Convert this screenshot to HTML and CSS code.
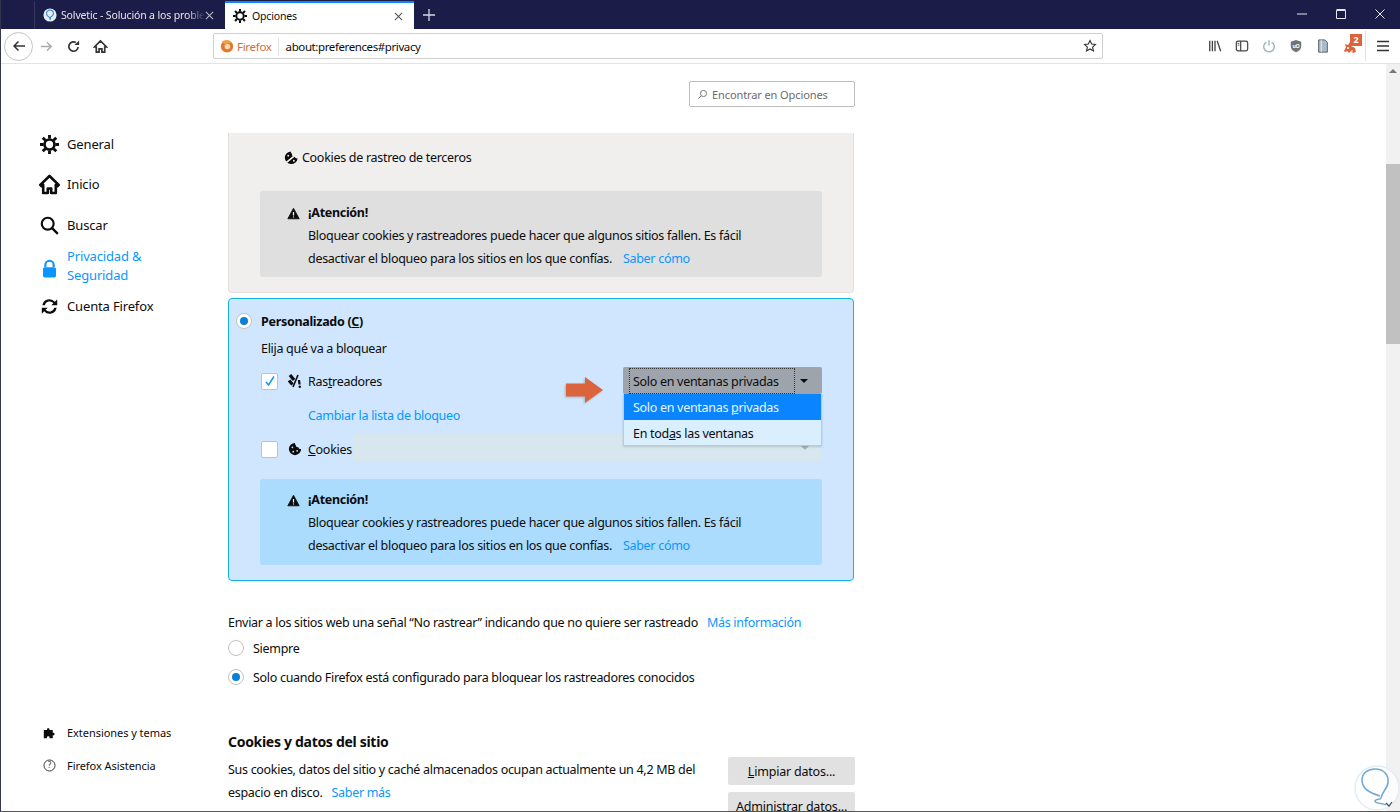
FILE: index.html
```html
<!DOCTYPE html>
<html lang="es">
<head>
  <meta charset="utf-8">
  <title>Opciones</title>
  <link rel="stylesheet" href="styles.css">
</head>
<body>
<div class="window">
  <div class="tabbar">
    <div class="tab tab-bg">
      <svg class="fav" viewBox="0 0 16 16"><circle cx="8" cy="8" r="7.5" fill="#e4eef6"/><path d="M8 2.500c-2.600 0-4.200 2-4 4.200.2 2 2 3 3.200 4 .6.5.6 1.500 1 2.300.5-.4.7-1.500.2-2.500 2-1 3.500-2.300 3.500-4.200 0-2.200-1.700-3.800-3.900-3.800z" fill="none" stroke="#4a8fc4" stroke-width="1.300"/></svg>
      <span class="tab-title fade">Solvetic - Solución a los proble</span>
      <svg class="tab-x" viewBox="0 0 10 10"><path d="M1 1l8 8M9 1l-8 8" stroke="#b9bacb" stroke-width="1.200"/></svg>
    </div>
    <div class="tab tab-on">
      <svg class="fav" viewBox="0 0 16 16"><use href="#gear"/></svg>
      <span class="tab-title">Opciones</span>
      <svg class="tab-x" viewBox="0 0 10 10"><path d="M1 1l8 8M9 1l-8 8" stroke="#555" stroke-width="1.200"/></svg>
    </div>
    <svg class="newtab" viewBox="0 0 12 12"><path d="M6 0v12M0 6h12" stroke="#d6d7e2" stroke-width="1.300"/></svg>
    <div class="winctl">
      <svg viewBox="0 0 10 10"><path d="M0 5h10" stroke="#e6e6ee"/></svg>
      <svg viewBox="0 0 10 10"><path d="M.5 1.500h9v8h-9z M.5 .5h9" fill="none" stroke="#e6e6ee"/></svg>
      <svg viewBox="0 0 10 10"><path d="M.5 .5l9 9M9.500 .5l-9 9" stroke="#e6e6ee"/></svg>
    </div>
  </div>

  <div class="toolbar">
    <div class="back"><svg viewBox="0 0 16 16"><path d="M14 8H3M7.500 3.500L3 8l4.500 4.500" fill="none" stroke="#333" stroke-width="1.500"/></svg></div>
    <svg class="tbicon first" viewBox="0 0 16 16"><path d="M2 8h11M8.500 3.500L13 8l-4.500 4.500" fill="none" stroke="#aaa" stroke-width="1.500"/></svg>
    <svg class="tbicon" viewBox="0 0 16 16"><path d="M13 8.500A5 5 0 1 1 10.500 3.700" fill="none" stroke="#333" stroke-width="1.800"/><path d="M14 1.500v5h-5z" fill="#333"/></svg>
    <svg class="tbicon" viewBox="0 0 16 16"><path d="M8 2L1.500 8.500H3.500V14h3v-3.500h3V14h3V8.500h2z" fill="none" stroke="#333" stroke-width="1.800"/></svg>
    <div class="urlbar">
      <svg class="fxlogo" viewBox="0 0 16 16"><circle cx="8" cy="8.500" r="7" fill="#e8752c"/><circle cx="8.500" cy="8.500" r="3.200" fill="#f8d9b8"/><path d="M2.500 3c3-2.500 9-2.500 11 2-3-1-6 0-7 2z" fill="#f3a13a"/></svg>
      <span class="fxname">Firefox</span>
      <span class="urlsep"></span>
      <span class="urltext">about:preferences#privacy</span>
      <svg class="star" viewBox="0 0 16 16"><path d="M8 1.800l1.900 4 4.300.5-3.200 3 .9 4.300L8 11.400l-3.900 2.200.9-4.300-3.200-3 4.300-.5z" fill="none" stroke="#333" stroke-width="1.300"/></svg>
    </div>
    <div class="tools">
      <svg viewBox="0 0 16 16"><path d="M2 2v12M5 2v12M8 2v12M10.500 2l4 12" stroke="#444" stroke-width="1.500" fill="none"/></svg>
      <svg viewBox="0 0 16 16"><rect x="1.500" y="2.500" width="13" height="11" rx="2" fill="none" stroke="#444" stroke-width="1.400"/><path d="M6.500 2.500v11" stroke="#444" stroke-width="1.400"/><path d="M3 5h2M3 7h2" stroke="#444"/></svg>
      <svg viewBox="0 0 16 16"><path d="M5 3.500a6 6 0 1 0 6 0" fill="none" stroke="#9db2bf" stroke-width="1.600"/><path d="M8 1.500v6" stroke="#9db2bf" stroke-width="1.600"/></svg>
      <svg viewBox="0 0 16 16"><path d="M8 1l6 2v5c0 3.500-2.500 6-6 7-3.500-1-6-3.500-6-7V3z" fill="#6f7478"/><text x="8" y="10" class="ublock">uO</text></svg>
      <svg viewBox="0 0 16 16"><path d="M3 1h7l3 3v11H3z" fill="#a9bccb" stroke="#555"/><path d="M6 1v14" stroke="#eef2f5"/></svg>
      <div class="ext">
        <svg viewBox="0 0 14 14"><path d="M1 11l2-4-1-3 3 1 2-3 1 4 4 2 1 4-3 1-2-2-2 2-2-2-2 1z" fill="#d9663c"/><circle cx="5" cy="8" r="1" fill="#fff"/><circle cx="9" cy="11" r="1" fill="#f3c7b4"/></svg>
        <span class="badge">2</span>
      </div>
      <span class="toolsep"></span>
      <svg class="burger" viewBox="0 0 12 12"><path d="M0 1.500h12M0 6h12M0 10.500h12" stroke="#333" stroke-width="1.600"/></svg>
    </div>
  </div>

  <div class="page">
    <nav class="sidebar">
      <ul class="nav-main">
        <li class="nav-item"><svg viewBox="0 0 16 16"><use href="#gear"/></svg>General</li>
        <li class="nav-item"><svg class="nav-home" viewBox="0 0 16 16"><path d="M8 1.500L1 8.300l1 1 1.200-1.100V14.500h3.500v-3.500h2.600v3.500h3.500V8.200L14 9.300l1-1z" fill="none" stroke="#0c0c0d" stroke-width="2" stroke-linejoin="round"/></svg>Inicio</li>
        <li class="nav-item"><svg viewBox="0 0 16 16"><circle cx="6.500" cy="6.500" r="5" fill="none" stroke="#0c0c0d" stroke-width="1.800"/><path d="M10.200 10.200L15 15" stroke="#0c0c0d" stroke-width="2"/></svg>Buscar</li>
        <li class="nav-item nav-active"><svg viewBox="0 0 16 16"><path d="M4.500 7V5a3.500 3.500 0 0 1 7 0v2" fill="none" stroke="#0a96ff" stroke-width="1.800"/><rect x="2.500" y="7" width="11" height="8.500" rx="1.500" fill="#0a96ff"/></svg><span>Privacidad &amp;<br>Seguridad</span></li>
        <li class="nav-item"><svg viewBox="0 0 16 16"><path d="M2 7a6 6 0 0 1 10.500-3L14.500 2v5h-5l1.800-1.800A4.200 4.200 0 0 0 4 7zM14 9a6 6 0 0 1-10.500 3L1.500 14V9h5L4.700 10.800A4.200 4.200 0 0 0 12 9z" fill="#0c0c0d"/></svg>Cuenta Firefox</li>
      </ul>
      <ul class="nav-foot">
        <li class="foot-item"><svg viewBox="0 0 16 16"><path d="M1 5h4c-1-3 4-3 3 0h4v3.500c3-1 3 4 0 3V15H8c1-3-4-3-3 0H1z" fill="#0c0c0d"/></svg>Extensiones y temas</li>
        <li class="foot-item"><svg viewBox="0 0 16 16"><circle cx="8" cy="8" r="6.800" fill="none" stroke="#333" stroke-width="1.200"/><text x="8" y="11.500" class="qmark">?</text></svg>Firefox Asistencia</li>
      </ul>
    </nav>

    <main class="content">
      <div class="search-row">
        <div class="search"><svg viewBox="0 0 16 16"><circle cx="9.500" cy="6.500" r="4.500" fill="none" stroke="#777" stroke-width="1.400"/><path d="M6 10l-4 4" stroke="#777" stroke-width="1.400"/></svg>Encontrar en Opciones</div>
      </div>

      <section class="panel panel-grey">
        <div class="tp-row">
          <svg viewBox="0 0 16 16"><path d="M7 1.500a6.800 6.800 0 1 0 7.500 7.500c-1.800.2-2.800-.6-3-2-1.800.2-3.300-1-3-2.800C7.800 3.500 7.200 2.500 7 1.500z" fill="#0c0c0d"/><path d="M1 14.500L15 3" stroke="#f0efee" stroke-width="1.800"/><circle cx="4.500" cy="6" r="1" fill="#f0efee"/><circle cx="10.500" cy="11.500" r="1" fill="#f0efee"/></svg>
          Cookies de rastreo de terceros
        </div>
        <div class="warn warn-grey">
          <svg class="warn-icon" viewBox="0 0 16 16"><path d="M8 1.500L15 14.500H1z" fill="#0c0c0d" stroke="#0c0c0d" stroke-linejoin="round"/><path d="M8 6v4.500M8 11.800v1.200" stroke="#fff" stroke-width="1.500"/></svg>
          <div>
            <strong class="warn-title">¡Atención!</strong>
            <p class="warn-text">Bloquear cookies y rastreadores puede hacer que algunos sitios fallen. Es fácil<br>desactivar el bloqueo para los sitios en los que confías. <a class="link warn-link">Saber cómo</a></p>
          </div>
        </div>
      </section>

      <section class="panel panel-blue">
        <div class="custom-head"><span class="radio on"></span><strong>Personalizado (<u>C</u>)</strong></div>
        <div class="custom-sub">Elija qué va a bloquear</div>
        <div class="opt-row opt-track">
          <span class="check"><svg viewBox="0 0 12 12"><path d="M2 7l2.500 3L10 1.500" fill="none" stroke="#0a96ff" stroke-width="1.500"/></svg></span>
          <svg class="opt-icon" viewBox="0 0 14 14"><path d="M2 1l4 5M1 6.500l3.500 4" fill="none" stroke="#0c0c0d" stroke-width="3.200"/><path d="M10 1L5 13" stroke="#0c0c0d" stroke-width="1.600"/><path d="M11 6l.5 4.500" stroke="#0c0c0d" stroke-width="2.200"/><circle cx="11.800" cy="12.800" r="1.200" fill="#0c0c0d"/></svg>
          <span>Ras<u>t</u>readores</span>
          <div class="select select-open">
            <span class="select-val">Solo en ventanas privadas</span>
            <span class="select-arrow"></span>
          </div>
        </div>
        <a class="link change-list">Cambiar la lista de bloqueo</a>
        <div class="opt-row opt-cookies">
          <span class="check"></span>
          <svg class="opt-icon" viewBox="0 0 16 16"><path d="M8 1a7 7 0 1 0 7 7c-2 .5-3-.5-3-2-2 .5-3.500-1-3-2.500C8 3 8 2 8 1z" fill="#0c0c0d"/><circle cx="5" cy="6" r="1" fill="#cfe6fe"/><circle cx="6" cy="11" r="1" fill="#cfe6fe"/><circle cx="10.500" cy="10" r="1" fill="#cfe6fe"/></svg>
          <span class="cookie-label"><u>C</u>ookies</span>
          <div class="select select-off"><span class="select-arrow dim"></span></div>
        </div>
        <div class="warn warn-blue">
          <svg class="warn-icon" viewBox="0 0 16 16"><path d="M8 1.500L15 14.500H1z" fill="#0c0c0d" stroke="#0c0c0d" stroke-linejoin="round"/><path d="M8 6v4.500M8 11.800v1.200" stroke="#fff" stroke-width="1.500"/></svg>
          <div>
            <strong class="warn-title">¡Atención!</strong>
            <p class="warn-text">Bloquear cookies y rastreadores puede hacer que algunos sitios fallen. Es fácil<br>desactivar el bloqueo para los sitios en los que confías. <a class="link warn-link">Saber cómo</a></p>
          </div>
        </div>
        <ul class="menu">
          <li class="menu-item menu-sel">Solo en ventanas <u>p</u>rivadas</li>
          <li class="menu-item">En tod<u>a</u>s las ventanas</li>
        </ul>
        <svg class="callout" viewBox="0 0 40 28"><path d="M1 7.500h19V1l18 13-18 13v-6.500H1z" fill="#dc643c"/></svg>
      </section>

      <div class="dnt">Enviar a los sitios web una señal “No rastrear” indicando que no quiere ser rastreado <a class="link link-gap">Más información</a></div>
      <div class="dnt-opt dnt-first"><span class="radio"></span>Siempre</div>
      <div class="dnt-opt"><span class="radio on"></span>Solo cuando Firefox está configurado para bloquear los rastreadores conocidos</div>

      <h2 class="sec-title">Cookies y datos del sitio</h2>
      <div class="site-data">
        <p class="site-text">Sus cookies, datos del sitio y caché almacenados ocupan actualmente un 4,2 MB del espacio en disco. <a class="link link-gap">Saber más</a></p>
        <div class="site-btns">
          <button class="btn"><u>L</u>impiar datos...</button>
          <button class="btn">Ad<u>m</u>inistrar datos...</button>
        </div>
      </div>
    </main>

    <div class="scrollbar">
      <span class="scroll-up"></span>
      <span class="scroll-thumb"></span>
    </div>
    <svg class="watermark" viewBox="0 0 46 46"><circle cx="23" cy="23" r="22" fill="#fff" fill-opacity=".75" stroke="#e3edf5" stroke-width="1.500"/><path d="M26 31C16 28 8 24 8 15 8 8 14 4 21 4c9 0 14 6 13 14-1 6-6 9-7 15-1 2-6 1-6 3 0 3 8 2 11 4" fill="none" stroke="#74aad4" stroke-width="1.600"/><path d="M32 38l3 3 3-4" fill="none" stroke="#3c4a58" stroke-width="1.200"/></svg>
  </div>
</div>

<svg class="defs" width="0" height="0">
  <symbol id="gear" viewBox="0 0 16 16">
    <circle cx="8" cy="8" r="4.200" fill="none" stroke="#0c0c0d" stroke-width="2.200"/>
    <path d="M8 0v3M8 13v3M0 8h3M13 8h3M2.300 2.300l2.200 2.200M11.500 11.500l2.200 2.200M13.700 2.300l-2.200 2.200M4.500 11.500l-2.200 2.200" stroke="#0c0c0d" stroke-width="2.400"/>
  </symbol>
</svg>
</body>
</html>
```

FILE: styles.css
```css
* {
  box-sizing: border-box;
}
html, body {
  margin: 0;
  height: 812px;
  overflow: hidden;
}
body {
  font-family: "Noto Sans", "Open Sans", sans-serif;
  font-size: 12.5px;
  letter-spacing: -0.3px;
  color: #0c0c0d;
  background: #fff;
}
ul {
  list-style: none;
  margin: 0;
  padding: 0;
}
p {
  margin: 0;
}
svg {
  display: block;
  flex: none;
}
.defs {
  position: absolute;
}
.window {
  height: 812px;
  display: flex;
  flex-direction: column;
  border-left: 1px solid #33344f;
  border-bottom: 1px solid #555;
}

/* tab strip */
.tabbar {
  height: 29px;
  background: #1b1c47;
  display: flex;
  align-items: flex-end;
  padding-left: 33px;
  flex: none;
}
.tab {
  height: 28px;
  display: flex;
  align-items: center;
  font-size: 10.5px;
  letter-spacing: -0.15px;
}
.tab-bg {
  width: 191px;
  padding: 0 12px 0 8px;
  color: #e6e6ee;
  border-left: 1px solid #36375f;
}
.tab-on {
  width: 189px;
  padding: 0 11px 0 8px;
  background: #fff;
  border-top: 2px solid #0a84ff;
  color: #0c0c0d;
}
.fav {
  width: 14px;
  height: 14px;
  margin-right: 5px;
}
.tab-bg .fav {
  margin-right: 4px;
}
.tab-title {
  flex: 1;
  white-space: nowrap;
}
.fade {
  -webkit-mask-image: linear-gradient(to right, #000 88%, transparent 100%);
  mask-image: linear-gradient(to right, #000 88%, transparent 100%);
}
.tab-x {
  width: 9px;
  height: 9px;
}
.newtab {
  width: 12px;
  height: 12px;
  margin: 0 0 8px 9px;
}
.winctl {
  margin-left: auto;
  display: flex;
  gap: 29px;
  padding-bottom: 2px;
  align-items: center;
  height: 28px;
  width: 138px;
}
.winctl svg {
  width: 10px;
  height: 10px;
}
.winctl svg:first-child {
  margin-left: 35px;
}

/* nav toolbar */
.toolbar {
  height: 35px;
  flex: none;
  display: flex;
  align-items: center;
  background: #fff;
  border-bottom: 1px solid #e3e3e3;
  padding-left: 3px;
}
.back {
  width: 29px;
  height: 29px;
  border: 1px solid #c4c4c4;
  border-radius: 50%;
  display: flex;
  align-items: center;
  justify-content: center;
}
.back svg {
  width: 16px;
  height: 16px;
}
.tbicon {
  width: 15px;
  height: 15px;
  margin-left: 12px;
}
.tbicon.first {
  margin-left: 6px;
}
.urlbar {
  width: 890px;
  height: 26px;
  margin-left: 105px;
  border: 1px solid #cfcfcf;
  border-radius: 2px;
  display: flex;
  align-items: center;
  padding: 0 5px 0 6px;
  font-size: 11.5px;
}
.fxlogo {
  width: 14px;
  height: 14px;
}
.fxname {
  color: #cc6f3c;
  margin-left: 3px;
}
.urlsep {
  width: 1px;
  height: 17px;
  background: #e0e0e0;
  margin: 0 7px 0 6px;
}
.urltext {
  flex: 1;
  letter-spacing: -0.4px;
}
.star {
  width: 14px;
  height: 14px;
}
.tools {
  margin-left: 105px;
  display: flex;
  align-items: center;
  gap: 13px;
}
.tools svg {
  width: 14px;
  height: 14px;
}
.ublock {
  font-size: 6px;
  font-weight: 700;
  fill: #fff;
  text-anchor: middle;
}
.ext {
  position: relative;
  width: 16px;
  height: 16px;
}
.ext svg {
  position: absolute;
  left: 0;
  top: 2px;
  width: 14px;
  height: 14px;
}
.badge {
  position: absolute;
  top: -4px;
  left: 7px;
  width: 12px;
  height: 12px;
  background: #dc643c;
  color: #fff;
  font-size: 9px;
  font-weight: 700;
  line-height: 12px;
  text-align: center;
  letter-spacing: 0;
}
.toolsep {
  width: 1px;
  height: 30px;
  background: #e3e3e3;
  margin: 0 -2px 0 -7px;
}
.tools .burger {
  width: 12px;
  height: 12px;
}

/* page */
.page {
  flex: 1;
  display: flex;
  position: relative;
  overflow: hidden;
  min-height: 0;
}
.sidebar {
  width: 227px;
  flex: none;
  padding: 60px 0 0 39px;
  display: flex;
  flex-direction: column;
  justify-content: space-between;
  font-size: 13px;
  letter-spacing: -0.15px;
}
.nav-item {
  display: flex;
  align-items: center;
  gap: 8px;
  min-height: 40.500px;
  line-height: 19px;
}
.nav-item svg {
  width: 19px;
  height: 19px;
}
.nav-item .nav-home {
  width: 21px;
  height: 21px;
  margin: 0 -1px;
}
.nav-active {
  color: #0a96ff;
  min-height: 43px;
  margin: -1px 0;
}
.nav-active svg {
  margin-top: 4px;
}
.nav-foot {
  padding-bottom: 29px;
  font-size: 11px;
  letter-spacing: -0.05px;
}
.foot-item {
  display: flex;
  align-items: center;
  gap: 11px;
  height: 33px;
  padding-left: 3px;
}
.foot-item svg {
  width: 13px;
  height: 13px;
}
.qmark {
  font-size: 10px;
  text-anchor: middle;
  fill: #333;
}
.content {
  width: 626px;
  flex: none;
  padding-top: 17px;
}
.search-row {
  display: flex;
  justify-content: flex-end;
  margin-bottom: 26px;
  margin-right: -1px;
}
.search {
  width: 166px;
  height: 26px;
  border: 1px solid #bdbdbd;
  border-radius: 2px;
  display: flex;
  align-items: center;
  gap: 4px;
  padding-left: 7px;
  color: #6a6a6f;
  font-size: 11px;
  letter-spacing: -0.1px;
}
.search svg {
  width: 11px;
  height: 11px;
}

/* blocking panels */
.panel {
  position: relative;
}
.panel-grey {
  background: #f0efee;
  height: 160px;
  border: 1px solid #e2e1e0;
  border-top: none;
  border-radius: 0 0 4px 4px;
  padding: 14px 31px 0;
  margin-bottom: 5px;
}
.tp-row {
  display: flex;
  align-items: center;
  gap: 3px;
  height: 20px;
  padding-left: 24px;
}
.tp-row svg {
  width: 15px;
  height: 15px;
}
.warn {
  display: flex;
  gap: 8px;
  height: 86px;
  border-radius: 3px;
  padding: 11px 0 0 27px;
}
.warn-grey {
  background: #dfdfdf;
  margin-top: 24px;
  padding-top: 12px;
}
.warn-blue {
  background: #abdcfe;
  margin: 17px 0 0 23px;
}
.warn-icon {
  width: 13px;
  height: 13px;
  margin-top: 4px;
}
.warn-title {
  display: block;
  line-height: 20px;
  margin-bottom: 1px;
}
.warn-text {
  line-height: 23px;
}
.link {
  color: #0a96ff;
}
.link-gap {
  margin-left: 6px;
}
.warn-link {
  margin-left: 8px;
}
.panel-blue {
  background: #cfe6fe;
  border: 1px solid #10b4e8;
  border-radius: 4px;
  height: 283px;
  padding: 12px 31px 0 8px;
}
.custom-head {
  display: flex;
  align-items: center;
  gap: 9px;
  height: 20px;
  margin-left: -1px;
}
.radio {
  width: 16px;
  height: 16px;
  border-radius: 50%;
  background: #fff;
  border: 1px solid #c2c2c4;
  flex: none;
  display: flex;
  align-items: center;
  justify-content: center;
}
.radio.on::after {
  content: "";
  width: 8px;
  height: 8px;
  border-radius: 50%;
  background: #0a7fd6;
}
.custom-sub {
  margin: 8px 0 0 24px;
  height: 20px;
  line-height: 20px;
}
.opt-row {
  display: flex;
  align-items: center;
  height: 26px;
  padding-left: 24px;
}
.opt-track {
  margin-top: 9px;
}
.opt-cookies {
  margin-top: 10px;
}
.check {
  width: 17px;
  height: 17px;
  background: #fff;
  border: 1px solid #c2c2c4;
  border-radius: 2px;
  display: flex;
  align-items: center;
  justify-content: center;
  flex: none;
}
.check svg {
  width: 12px;
  height: 12px;
}
.opt-icon {
  width: 14px;
  height: 14px;
  margin: 0 6px 0 10px;
}
.select {
  margin-left: auto;
  width: 199px;
  height: 27px;
  border-radius: 2px;
  display: flex;
  align-items: center;
  position: relative;
}
.select-open {
  background: #9ea4ab;
  margin-bottom: 1px;
}
.select-val {
  margin-left: 6px;
  width: 166px;
  height: 26px;
  border: 1px dotted #333;
  display: flex;
  align-items: center;
  padding: 1px 0 0 3px;
}
.select-arrow {
  width: 0;
  height: 0;
  margin-left: 5px;
  border: 4px solid transparent;
  border-top: 4px solid #0c0c0d;
  border-bottom: none;
}
.select-off {
  flex: 1;
  width: auto;
  background: #d8e7ee;
  margin-left: 1px;
  margin-bottom: 3px;
  justify-content: flex-end;
  padding-right: 13px;
}
.dim {
  border-top-color: #a6b3bb;
}
.change-list {
  display: block;
  margin: 12px 0 0 71px;
  height: 20px;
  line-height: 20px;
}
.menu {
  position: absolute;
  left: 394px;
  top: 95px;
  width: 199px;
  background: #d9effe;
  border: 1px solid #c8c8c8;
  border-top: none;
  box-shadow: 0 1px 2px rgba(0, 0, 0, .15);
}
.menu-item {
  height: 25px;
  line-height: 27px;
  padding-left: 9px;
}
.menu-sel {
  height: 26px;
  line-height: 28px;
  background: #0a84ff;
  color: #e9f3ff;
}
.callout {
  position: absolute;
  left: 336px;
  top: 77px;
  width: 40px;
  height: 28px;
  filter: drop-shadow(-1px 1px 1px rgba(0, 0, 0, .2));
}

/* do not track */
.dnt {
  margin-top: 32px;
  height: 20px;
  line-height: 20px;
}
.dnt-opt {
  display: flex;
  align-items: center;
  gap: 9px;
  height: 20px;
  margin-top: 9px;
}
.dnt-first {
  margin-top: 5px;
}
.sec-title {
  font-size: 14px;
  font-weight: 700;
  margin: 45px 0 0;
  height: 20px;
  line-height: 20px;
}
.site-data {
  display: flex;
  justify-content: space-between;
  margin-top: 6px;
}
.site-text {
  width: 480px;
  line-height: 23px;
}
.site-btns {
  display: flex;
  flex-direction: column;
  gap: 7px;
  margin-top: -1px;
  margin-right: -1px;
  flex: none;
}
.btn {
  width: 127px;
  height: 28px;
  background: #e1e1e1;
  border: none;
  border-radius: 2px;
  font: inherit;
  letter-spacing: -0.2px;
  color: #0c0c0d;
  padding: 0;
}
.scrollbar {
  position: absolute;
  right: 0;
  top: 0;
  width: 14px;
  height: 100%;
  background: #f1f1f1;
}
.scroll-thumb {
  position: absolute;
  left: 0;
  top: 100px;
  width: 14px;
  height: 180px;
  background: #c1c1c1;
}
.scroll-up {
  position: absolute;
  left: 3px;
  top: 5px;
  border: 4px solid transparent;
  border-bottom: 4px solid #777;
  border-top: none;
}
.watermark {
  position: absolute;
  right: 0;
  bottom: 0;
  width: 46px;
  height: 46px;
}
```
